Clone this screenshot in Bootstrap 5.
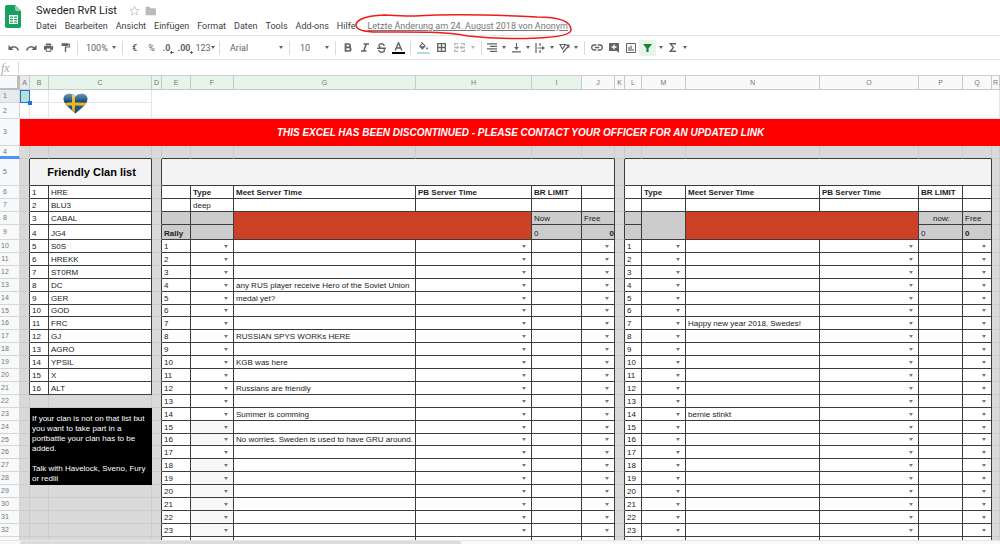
<!DOCTYPE html>
<html lang="de">
<head>
<meta charset="utf-8">
<meta name="viewport" content="width=device-width, initial-scale=1">
<title>Sweden RvR List</title>
<link href="https://cdn.jsdelivr.net/npm/bootstrap@5.3.0/dist/css/bootstrap.min.css" rel="stylesheet">
<style>
  :root { --ink: #5f6368; --rule: #3c3c3c; --soft: #c9c9c9; }
  body { font-family: Roboto, sans-serif; font-size: 9px; line-height: 12px; color: #3c4043; background: #fff; }
  button, select, input { font: inherit; color: inherit; border: 0; background: none; padding: 0; margin: 0; }
  svg { display: block; }

  /* title and menus */
  .doc-head { height: 36px; padding-left: 4px; }
  .doc-logo { width: 32px; padding-top: 5px; }
  .doc-title { font-family: Roboto, sans-serif; font-size: 11px; line-height: 13px; font-weight: 400; color: #222; }
  .menus { gap: 8px; height: 14px; margin-top: 2px; }
  .menus a { color: #3c4043; text-decoration: none; line-height: 14px; }
  .menus .last-edit { color: #777; text-decoration: underline; margin-left: 4px; position: relative; }
  .ring { position: absolute; left: -12px; top: -5px; pointer-events: none; overflow: visible; }

  /* toolbar */
  .tools { height: 25px; border-top: 1px solid #e3e4e6; border-bottom: 1px solid #e3e4e6; padding-left: 4px; color: var(--ink); }
  .tools button { height: 16px; width: 17px; display: flex; align-items: center; justify-content: center; }
  .tools .wide { width: 18px; }
  .tools .slim { width: 14px; }
  .tools .drop { width: 10px; }
  .tools .formats { width: 22px; }
  .tools .lit { background: #e6f4ea; color: #188038; }
  .tools button:disabled { color: #b5b7ba; }
  .divide { width: 7px; height: 14px; flex: none; background: linear-gradient(#dadce0, #dadce0) center / 1px 100% no-repeat; }
  .tri { width: 0; height: 0; border: 2px solid transparent; border-top: 3px solid currentColor; border-bottom: 0; }
  .pick { display: flex; align-items: center; padding-right: 3px; }
  .pick select { appearance: none; flex: 1; min-width: 0; outline: 0; }
  .pick-zoom { width: 38px; padding-left: 5px; }
  .pick-font { width: 63px; padding-left: 7px; }
  .pick-size { width: 39px; padding-left: 7px; }
  .swatch { flex-direction: column; }
  .swatch::after { content: ""; width: 13px; height: 2px; margin-top: 1px; background: #000; }
  .swatch.mint::after { background: #b7e1cd; }

  /* formula bar */
  .formula { height: 15px; }
  .formula label { width: 19px; padding-left: 1px; font: italic 12px/12px "Liberation Serif", serif; color: #aaa; border-right: 1px solid #dadce0; }
  .formula input { outline: 0; }

  /* grid */
  .sheet-area { min-height: 0; overflow: hidden; position: relative; }
  .sheet { table-layout: fixed; width: 100%; border-collapse: separate; border-spacing: 0; font-family: "Liberation Sans", sans-serif; font-size: 8px; line-height: 11px; color: #222; }
  .sheet td, .sheet th { padding: 0; border: 0 solid var(--soft); border-width: 0 1px 1px 0; overflow: hidden; white-space: nowrap; vertical-align: bottom; }
  .sheet td { background: #d9d9d9; border-color: #cbcbcb; }
  .sheet thead th { height: 15px; border-top: 1px solid #d0d0d0; background: #f8f9fa; font-size: 7px; font-weight: 400; text-align: center; vertical-align: middle; color: #777; }
  .sheet thead .in-range { background: #e6f4ea; }
  .sheet thead .picked, .sheet tbody .picked { background: #e8eaed; }
  .sheet thead .corner { border-right: 3px solid #bdbdbd; border-bottom: 2px solid #bdbdbd; }
  .sheet tbody th { background: #f8f9fa; border-color: #d5d5d5; font-size: 7px; font-weight: 400; text-align: center; vertical-align: middle; padding-right: 9px; color: #777; line-height: 10px; }
  .sheet tbody .frozen { border-bottom: 3px solid #4d90fe; line-height: 9px; }
  .sheet .blank { background: #fff; border-color: #e6e6e6; }
  .sheet .active-cell { background: #b7e1cd; border: 1px solid #1a73e8; }
  .sheet .box { background: #fff; border-color: var(--rule); padding-left: 2px; }
  .sheet .edge { border-right-color: var(--rule); }
  .sheet .cap { border-bottom-color: var(--rule); }
  .sheet .pane { background: #f3f3f3; }
  .sheet .tint { background: #f8f8f8; }
  .sheet .shade { background: #ccc; }
  .sheet .rust { background: #cc4125; }
  .sheet .heading { font-size: 11px; font-weight: 700; text-align: center; vertical-align: middle; color: #000; }
  .sheet .alert-row { background: #f00; border-color: #f00; color: #fff; font-size: 10px; font-weight: 700; font-style: italic; text-align: center; vertical-align: middle; padding-left: 22px; }
  .sheet .notice { background: #000; border-color: #000; color: #fff; line-height: 10px; white-space: normal; padding-left: 2px; }
  .sheet .notice p { margin: 0 0 10px; }
  .sheet .notice p:last-child { margin: 0; }
  .cell-drop { display: block; width: 6px; height: 11px; margin: 0 3px 0 auto !important; color: #777; }
  .handle { position: absolute; left: 28px; top: 26px; width: 4px; height: 4px; background: #1a73e8; }
  .flag-heart { position: absolute; left: 63px; top: 18px; }

  .scroll-track { height: 4px; background: #f8f8f8; border-top: 1px solid #e6e6e6; padding-left: 20px; }
  .scroll-thumb { width: 45%; height: 3px; background: #dadce0; border-radius: 2px 2px 0 0; }
</style>
</head>
<body class="d-flex flex-column vh-100 overflow-hidden">

<header class="doc-head d-flex">
  <div class="doc-logo">
    <svg width="18" height="24" viewBox="0 0 18 24" aria-hidden="true"><path d="M3 0h8l6 6v15a2 2 0 0 1-2 2H3a2 2 0 0 1-2-2V2a2 2 0 0 1 2-2z" fill="#17a05e"/><path d="M11 0l6 6h-4a2 2 0 0 1-2-2z" fill="#8ed1b1"/><path d="M5 10h9v9H5z" fill="#fff"/><path d="M6 11.5h3v1.3H6zm4 0h3v1.3h-3zM6 14h3v1.3H6zm4 0h3v1.3h-3zM6 16.500h3v1.3H6zm4 0h3v1.3h-3z" fill="#17a05e"/></svg>
  </div>
  <div>
    <div class="d-flex align-items-center pt-1">
      <h1 class="doc-title m-0">Sweden RvR List</h1>
      <button type="button" aria-label="Markieren" class="ms-2 ps-1"><svg width="11" height="11" viewBox="0 0 24 24" fill="none" stroke="#c4c7ca" stroke-width="2"><path d="M12 2.500l2.800 6.800 7.200.6-5.500 4.800 1.700 7.100L12 18l-6.200 3.800 1.700-7.100L2 9.900l7.200-.6z"/></svg></button>
      <button type="button" aria-label="Verschieben" class="ms-1"><svg width="13" height="12" viewBox="0 0 24 22"><path d="M4 3h6l2 3h9a1 1 0 0 1 1 1v11a1 1 0 0 1-1 1H4a1 1 0 0 1-1-1V4a1 1 0 0 1 1-1z" fill="#bababa"/></svg></button>
    </div>
    <nav class="menus d-flex align-items-center text-nowrap">
      <a href="#">Datei</a><a href="#">Bearbeiten</a><a href="#">Ansicht</a><a href="#">Einfügen</a><a href="#">Format</a><a href="#">Daten</a><a href="#">Tools</a><a href="#">Add-ons</a><a href="#">Hilfe</a>
      <a href="#" class="last-edit">Letzte Änderung am 24. August 2018 von Anonym<svg class="ring" width="218" height="26" viewBox="0 0 218 26" fill="none" stroke="#f01c1c" stroke-width="1.500"><path d="M32 1C14 1 1 5 1 11c0 5 8 7 22 7 32 0 62-1 90 4 25 3 50 3 70 2 20-1 33-3 33-8 0-10-14-13-34-13-40-2-90-3-122-1-14 0-24-1-32-1z"/></svg></a>
    </nav>
  </div>
</header>

<div class="tools d-flex align-items-center flex-shrink-0" role="toolbar">
  <button type="button" class="wide" aria-label="Rückgängig"><svg width="11" height="8" viewBox="0 0 11 8" fill="none" stroke="currentColor" stroke-width="1.500"><path d="M2 4.500C5 2 9 2 10.300 6.500"/><path d="M.5 1v5H5.500z" fill="currentColor" stroke="none"/></svg></button>
  <button type="button" class="wide" aria-label="Wiederholen"><svg width="11" height="8" viewBox="0 0 11 8" fill="none" stroke="currentColor" stroke-width="1.500"><path d="M9 4.500C6 2 2 2 .7 6.500"/><path d="M10.500 1v5H5.500z" fill="currentColor" stroke="none"/></svg></button>
  <button type="button" aria-label="Drucken"><svg width="11" height="11" viewBox="0 0 24 24" fill="currentColor"><path d="M19 8H5a3 3 0 0 0-3 3v6h4v4h12v-4h4v-6a3 3 0 0 0-3-3zm-3 11H8v-5h8zm3-7a1 1 0 1 1 0-2 1 1 0 0 1 0 2zM18 3H6v4h12z"/></svg></button>
  <button type="button" aria-label="Format übertragen"><svg width="11" height="11" viewBox="0 0 24 24" fill="currentColor"><path d="M18 4V2.500H3.500V8.500H18V6h2v4h-9.500v12h3v-9.800H22V4z"/></svg></button>
  <span class="divide"></span>
  <div class="pick pick-zoom"><select aria-label="Zoom"><option>100%</option></select><span class="tri"></span></div>
  <span class="divide"></span>
  <button type="button" class="fw-bold">€</button>
  <button type="button">%</button>
  <button type="button" class="fw-bold" aria-label="Weniger Dezimalstellen"><span>.0</span><svg width="4" height="12" viewBox="0 0 4 12" fill="none" stroke="currentColor"><path d="M0 10.500h4M2 9L.5 10.500 2 12"/></svg></button>
  <button type="button" class="fw-bold" aria-label="Mehr Dezimalstellen"><span>.00</span><svg width="3" height="12" viewBox="0 0 3 12" fill="none" stroke="currentColor"><path d="M-1 10.500h4M1 9l1.500 1.500L1 12"/></svg></button>
  <button type="button" class="formats"><span>123</span><span class="tri"></span></button>
  <span class="divide"></span>
  <div class="pick pick-font"><select aria-label="Schriftart"><option>Arial</option></select><span class="tri"></span></div>
  <span class="divide"></span>
  <div class="pick pick-size"><select aria-label="Schriftgröße"><option>10</option></select><span class="tri"></span></div>
  <span class="divide"></span>
  <button type="button" aria-label="Fett"><svg width="8" height="9" viewBox="0 0 8 9" fill="none" stroke="currentColor" stroke-width="1.700"><path d="M1.500 1h3a1.700 1.700 0 0 1 0 3.400h-3zm0 3.400h3.400a1.800 1.800 0 0 1 0 3.600H1.500z"/></svg></button>
  <button type="button" aria-label="Kursiv"><svg width="8" height="9" viewBox="0 0 8 9" fill="none" stroke="currentColor" stroke-width="1.500"><path d="M2.500 1H8M0 8h5.500M5.300 1L2.700 8"/></svg></button>
  <button type="button" aria-label="Durchgestrichen"><svg width="9" height="10" viewBox="0 0 9 10" fill="none" stroke="currentColor" stroke-width="1.400"><path d="M7.200 2.800C6.800 0 2 .2 2 2.600c0 1 .6 1.600 1.600 1.900M0 5.200h9M1.800 7c.4 3 5.600 2.900 5.600.2 0-.6-.2-1-.5-1.400"/></svg></button>
  <button type="button" class="swatch" aria-label="Textfarbe"><svg width="9" height="9" viewBox="0 0 9 9" fill="none" stroke="currentColor" stroke-width="1.400"><path d="M1.200 8.500L4.500.8l3.300 7.700M2.400 6h4.200"/></svg></button>
  <span class="divide"></span>
  <button type="button" class="wide swatch mint" aria-label="Füllfarbe"><svg width="11" height="9" viewBox="0 0 24 20" fill="currentColor"><path d="M16.500 8L7.500-1 6 .5l2.500 2.500-5.500 5.500c-.6.6-.6 1.500 0 2L8.500 16c.6.600 1.500.600 2 0l6-6c.6-.6.6-1.400 0-2zM5 9.500l5-5 5 5zM20 11s-2 2.300-2 3.600a2 2 0 0 0 4 0C22 13.300 20 11 20 11z"/></svg></button>
  <button type="button" class="wide" aria-label="Rahmen"><svg width="9" height="9" viewBox="0 0 9 9" fill="none" stroke="currentColor" stroke-width="1.300"><path d="M.7.7h7.600v7.600H.7zM4.500.7v7.600M.7 4.500h7.600"/></svg></button>
  <button type="button" class="wide" aria-label="Zellen verbinden" disabled><svg width="11" height="9" viewBox="0 0 11 9" fill="none" stroke="currentColor" stroke-width="1.300"><path d="M.7 2.500V.7H4M7 .7h3.300v1.800M.7 6.500v1.800H4M7 8.300h3.300V6.500M0 4.500h4M7 4.500h4M3 3.300l1.300 1.200L3 5.700M8 3.300L6.700 4.500 8 5.700"/></svg></button>
  <button type="button" class="drop" aria-label="Verbinden: Optionen" disabled><span class="tri"></span></button>
  <span class="divide"></span>
  <button type="button" class="slim" aria-label="Rechtsbündig"><svg width="10" height="9" viewBox="0 0 10 9" stroke="currentColor" stroke-width="1.200"><path d="M0 .8h10M3 3.300h7M0 5.800h10M3 8.300h7"/></svg></button><button type="button" class="drop" aria-label="Ausrichtung"><span class="tri"></span></button>
  <button type="button" class="slim" aria-label="Unten"><svg width="9" height="10" viewBox="0 0 9 10" fill="currentColor"><path d="M0 8.300h9v1.300H0zM4 0h1v4h2L4.500 7 2 4h2z"/></svg></button><button type="button" class="drop" aria-label="Vertikale Ausrichtung"><span class="tri"></span></button>
  <button type="button" class="slim" aria-label="Umbruch"><svg width="10" height="10" viewBox="0 0 10 10" fill="none" stroke="currentColor" stroke-width="1.200"><path d="M1 0v10M5 0v3M5 7v3M2.500 5H8"/><path d="M7 3l3 2-3 2z" fill="currentColor" stroke="none"/></svg></button><button type="button" class="drop" aria-label="Textumbruch"><span class="tri"></span></button>
  <button type="button" class="slim" aria-label="Drehen"><svg width="11" height="10" viewBox="0 0 11 10" fill="none" stroke="currentColor" stroke-width="1.200"><path d="M6.500 1.500H1L3.500 6zM4 9.500L9.500 3"/><path d="M10.500 1.500v4l-4-4z" fill="currentColor" stroke="none"/></svg></button><button type="button" class="drop" aria-label="Textdrehung"><span class="tri"></span></button>
  <span class="divide"></span>
  <button type="button" aria-label="Link"><svg width="12" height="7" viewBox="0 0 12 7" fill="none" stroke="currentColor" stroke-width="1.300"><path d="M5.300 1H3.200a2.500 2.500 0 0 0 0 5h2.100M6.700 1h2.100a2.500 2.500 0 0 1 0 5H6.700M3.800 3.500h4.400"/></svg></button>
  <button type="button" aria-label="Kommentar"><svg width="10" height="10" viewBox="0 0 10 10"><path d="M0 .8C0 .3.300 0 .8 0h8.400c.5 0 .8.300.8.800V10L8 8H.8C.3 8 0 7.700 0 7.200z" fill="currentColor"/><path d="M5 1.500v5M2.500 4h5" stroke="#fff" stroke-width="1.300"/></svg></button>
  <button type="button" aria-label="Diagramm"><svg width="10" height="10" viewBox="0 0 10 10" fill="none" stroke="currentColor"><path d="M.5.500h9v9h-9z"/><path d="M3 4v4M5 2.500V8M7 6v2" stroke-width="1.200"/></svg></button>
  <button type="button" class="lit" aria-label="Filter"><svg width="9" height="8" viewBox="0 0 9 8" fill="currentColor"><path d="M0 0h9L5.600 4.300V8H3.400V4.300z"/></svg></button>
  <button type="button" class="drop" aria-label="Filteransichten"><span class="tri"></span></button>
  <button type="button" class="slim" aria-label="Funktionen"><svg width="8" height="9" viewBox="0 0 8 9" fill="none" stroke="currentColor" stroke-width="1.400"><path d="M7 .8H1.300L4.500 4.500 1.300 8.200H7"/></svg></button>
  <button type="button" class="drop" aria-label="Funktionsliste"><span class="tri"></span></button>
</div>

<div class="formula d-flex align-items-center flex-shrink-0">
  <label for="fx">fx</label><input id="fx" type="text" class="flex-grow-1">
</div>

<main class="sheet-area flex-grow-1">
  <table class="sheet">
    <colgroup id="cols"></colgroup>
    <thead><tr id="letters"></tr></thead>
    <tbody id="rows"></tbody>
  </table>
  <span class="handle"></span>
  <svg class="flag-heart" width="25" height="21" viewBox="0 0 25 21" aria-label="Schweden">
    <defs>
      <clipPath id="heart"><path d="M12.500 20.500C9 16.500.5 12 .5 6 .5 2.500 3.500.8 6.500.8c2.700 0 4.900 1 6 3 1.100-2 3.300-3 6-3 3 0 6 1.700 6 5.200 0 6-8.500 10.500-12 14.500z"/></clipPath>
      <linearGradient id="shine" x1="0" y1="0" x2="0" y2="1"><stop offset="0" stop-color="#fff" stop-opacity=".45"/><stop offset=".4" stop-color="#fff" stop-opacity="0"/><stop offset="1" stop-color="#000" stop-opacity=".25"/></linearGradient>
    </defs>
    <g clip-path="url(#heart)"><path d="M0 0h25v21H0z" fill="#14507f"/><path d="M9 0h3v21H9zM0 10.500c8-2 17 0 25-1v3c-8 1-17-1-25 1z" fill="#f0b51c"/><path d="M0 0h25v21H0z" fill="url(#shine)"/></g>
  </svg>
</main>
<div class="scroll-track flex-shrink-0"><div class="scroll-thumb"></div></div>

<script>
  const widths = [20, 10, 19, 103, 10, 29, 43, 182, 116, 50, 33, 10, 17, 44, 134, 99, 44, 29];
  document.getElementById('cols').innerHTML = widths.map(w => `<col style="width:${w}px">`).join('') + '<col>';

  document.getElementById('letters').innerHTML = '<th class="corner"></th>' +
    [...'ABCDEFGHIJKLMNOPQR'].map(c => `<th scope="col" class="${c === 'A' ? 'picked' : c < 'J' ? 'in-range' : ''}">${c}</th>`).join('');

  const heights = { 2: 16, 3: 27, 5: 27, 9: 15, 15: 12, 25: 12 };
  const clans = ['HRE', 'BLU3', 'CABAL', 'JG4', 'S0S', 'HREKK', 'ST0RM', 'DC', 'GER', 'GOD', 'FRC', 'GJ', 'AGRO', 'YPSIL', 'X', 'ALT'];
  const left = { 4: 'any RUS player receive Hero of the Soviet Union', 5: 'medal yet?', 8: 'RUSSIAN SPYS WORKs HERE', 10: 'KGB was here', 12: 'Russians are friendly', 14: 'Summer is comming', 16: 'No worries. Sweden is used to have GRU around.' };
  const right = { 7: 'Happy new year 2018, Swedes!', 14: 'bernie stinkt' };

  const td = (cls = '', text = '', attrs = '') => `<td class="${cls}" ${attrs}>${text}</td>`;
  const box = (text = '', cls = '') => td('box ' + cls, text);
  const drop = (cls = '') => box('<button type="button" class="cell-drop" aria-label="Auswahl"><span class="tri d-block"></span></button>', cls);

  function clanCells(r) {
    if (r === 5) return td('box pane heading', 'Friendly Clan list', 'colspan="2"');
    if (r <= 21) return box(r - 5) + box(clans[r - 6]);
    if (r === 23) return td('notice', '<p>If your clan is not on that list but you want to take part in a portbattle your clan has to be added.</p><p>Talk with Havelock, Sveno, Fury or rediii</p>', 'colspan="2" rowspan="6"');
    if (r > 23 && r <= 28) return '';
    return td() + td();
  }

  function planCells(r, first) {
    const n = r - 9;
    switch (r) {
      case 5: return td('box pane', '', 'colspan="6"');
      case 6: return box() + ['Type', 'Meet Server Time', 'PB Server Time', 'BR LIMIT', ''].map(t => box(t, 'fw-bold')).join('');
      case 7: return box() + box(first ? 'deep' : '') + box() + box() + box() + box();
      case 8: return box('', 'shade') + (first ? box('', 'shade') : td('box shade', '', 'rowspan="2"')) +
        td('box rust', '', 'colspan="2" rowspan="2"') + (first ? box('Now', 'shade') : box('now:', 'shade text-center')) + box('Free', 'shade');
      case 9: return first
        ? box('Rally', 'shade fw-bold') + box('', 'shade') + box('0', 'shade') + box('0', 'shade fw-bold text-end')
        : box('', 'shade') + box('0', 'shade') + box('0', 'shade fw-bold');
    }
    return box(n < 24 ? n : '') + drop(first && (r === 24 || r === 25 || r > 26) ? 'tint' : '') +
      box((first ? left : right)[n] || '') + drop() + box() + drop();
  }

  function rowCells(r) {
    if (r === 1) return td('active-cell') + td('blank') + td('blank') + td('blank', '', 'colspan="15" rowspan="2"');
    if (r === 2) return td('blank') + td('blank') + td('blank');
    if (r === 3) return td('alert-row', 'THIS EXCEL HAS BEEN DISCONTINUED - PLEASE CONTACT YOUR OFFICER FOR AN UPDATED LINK', 'colspan="18"');
    if (r === 4) return [...'ABCDEFGHIJKLMNOPQR'].map(c => td('ADKR'.includes(c) ? '' : 'cap')).join('');
    return td(r < 22 ? 'edge' : '') + clanCells(r) + td('edge') + planCells(r, true) + td('edge') + planCells(r, false) + td();
  }

  let html = '';
  for (let r = 1; r <= 33; r++) {
    html += `<tr style="height:${heights[r] || 13}px"><th scope="row" class="${r === 1 ? 'picked' : r === 4 ? 'frozen' : ''}">${r < 33 ? r : ''}</th>${rowCells(r)}</tr>`;
  }
  document.getElementById('rows').innerHTML = html;
</script>
<script src="https://cdn.jsdelivr.net/npm/bootstrap@5.3.0/dist/js/bootstrap.bundle.min.js"></script>
</body>
</html>
